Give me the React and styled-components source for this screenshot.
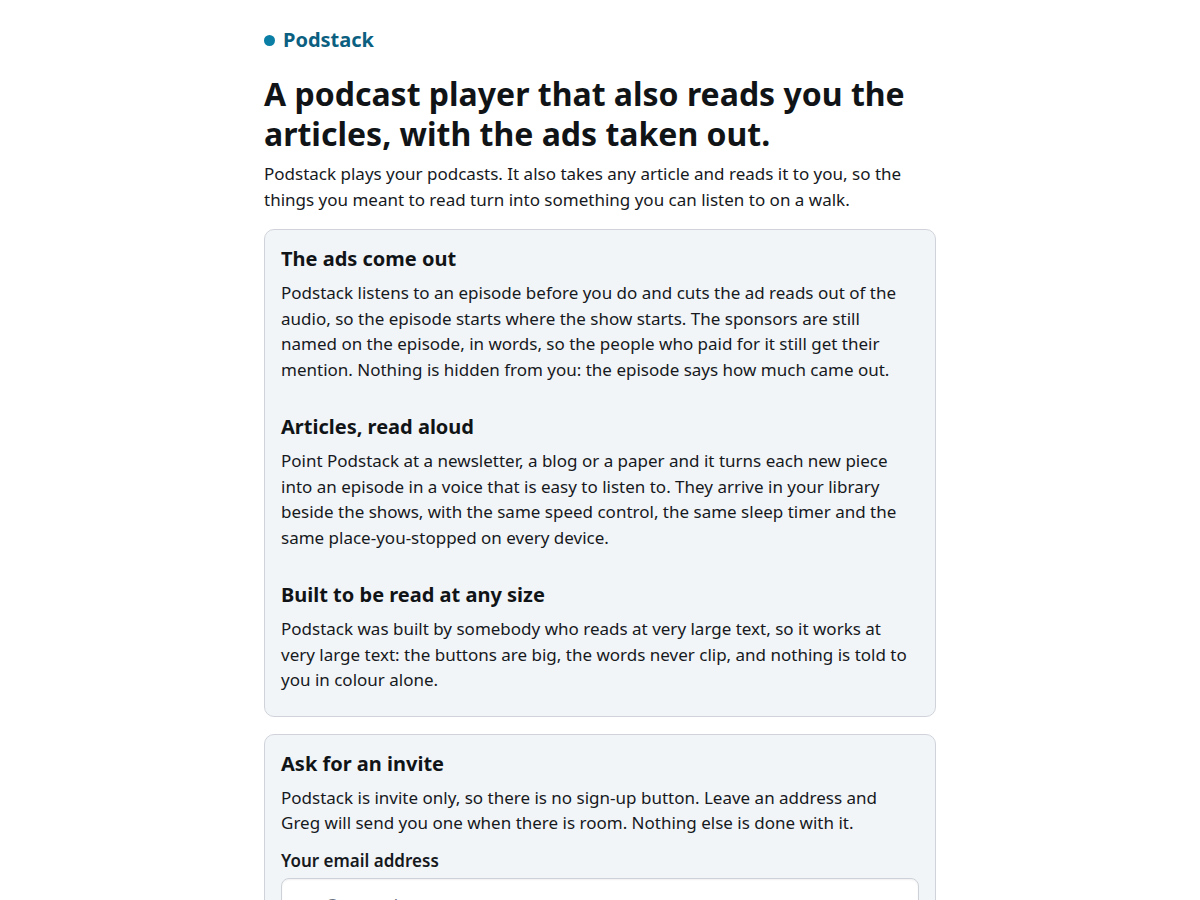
import React from 'react';
import styled, { createGlobalStyle } from 'styled-components';

const GlobalStyle = createGlobalStyle`
  body {
    margin: 0;
    background: #ffffff;
    color: #16191d;
    font-family: "Noto Sans", "Open Sans", sans-serif;
  }
`;

const Page = styled.main`
  width: 672px;
  margin: 0 auto;
  padding-top: 26px;
`;

const Brand = styled.div`
  display: flex;
  align-items: center;
  gap: 8px;
  font-size: 20px;
  line-height: 28px;
  font-weight: 700;
  color: #0b5f80;
`;

const Dot = styled.span`
  width: 11px;
  height: 11px;
  border-radius: 50%;
  background: #0a7ea4;
`;

const Title = styled.h1`
  margin: 20px 0 0;
  font-size: 32px;
  line-height: 40px;
  font-weight: 700;
  color: #111417;
`;

const Lead = styled.p`
  margin: 7px 0 0;
  font-size: 17px;
  line-height: 26px;
`;

const Card = styled.section`
  margin-top: ${(p) => p.$top || 17}px;
  background: #f2f5f8;
  border: 1px solid #d0d4da;
  border-radius: 10px;
  padding: 15px 16px 23px;
  display: flex;
  flex-direction: column;
  gap: ${(p) => p.$gap || 0}px;
`;

const Block = styled.div`
  display: flex;
  flex-direction: column;
  gap: 7px;
`;

const Heading = styled.h2`
  margin: 0;
  font-size: 20px;
  line-height: 28px;
  font-weight: 700;
  color: #111417;
`;

const Body = styled.p`
  margin: 0;
  font-size: 17px;
  line-height: 25.5px;
`;

const Label = styled.label`
  display: block;
  margin-top: 12px;
  font-size: 17px;
  line-height: 25.5px;
  font-weight: 600;
`;

const Input = styled.input`
  display: block;
  box-sizing: border-box;
  width: 100%;
  margin-top: 5px;
  padding: 13px 13px;
  font: inherit;
  font-size: 17px;
  line-height: 25.5px;
  background: #ffffff;
  border: 1px solid #cdd2d8;
  border-radius: 8px;
  box-shadow: inset 0 1px 2px rgba(0, 0, 0, 0.06);
  color: #16191d;

  &::placeholder {
    color: #6b7280;
  }
`;

const features = [
  {
    title: 'The ads come out',
    text: 'Podstack listens to an episode before you do and cuts the ad reads out of the audio, so the episode starts where the show starts. The sponsors are still named on the episode, in words, so the people who paid for it still get their mention. Nothing is hidden from you: the episode says how much came out.',
  },
  {
    title: 'Articles, read aloud',
    text: 'Point Podstack at a newsletter, a blog or a paper and it turns each new piece into an episode in a voice that is easy to listen to. They arrive in your library beside the shows, with the same speed control, the same sleep timer and the same place-you-stopped on every device.',
  },
  {
    title: 'Built to be read at any size',
    text: 'Podstack was built by somebody who reads at very large text, so it works at very large text: the buttons are big, the words never clip, and nothing is told to you in colour alone.',
  },
];

export default function App() {
  return (
    <>
      <GlobalStyle />
      <Page>
        <Brand>
          <Dot />
          Podstack
        </Brand>
        <Title>A podcast player that also reads you the articles, with the ads taken out.</Title>
        <Lead>
          Podstack plays your podcasts. It also takes any article and reads it to you, so the
          things you meant to read turn into something you can listen to on a walk.
        </Lead>

        <Card $top={16} $gap={31}>
          {features.map((f) => (
            <Block key={f.title}>
              <Heading>{f.title}</Heading>
              <Body>{f.text}</Body>
            </Block>
          ))}
        </Card>

        <Card>
          <Block>
            <Heading>Ask for an invite</Heading>
            <Body>
              Podstack is invite only, so there is no sign-up button. Leave an address and Greg
              will send you one when there is room. Nothing else is done with it.
            </Body>
          </Block>
          <Label htmlFor="email">Your email address</Label>
          <Input id="email" type="email" placeholder="you@example.com" />
        </Card>
      </Page>
    </>
  );
}
